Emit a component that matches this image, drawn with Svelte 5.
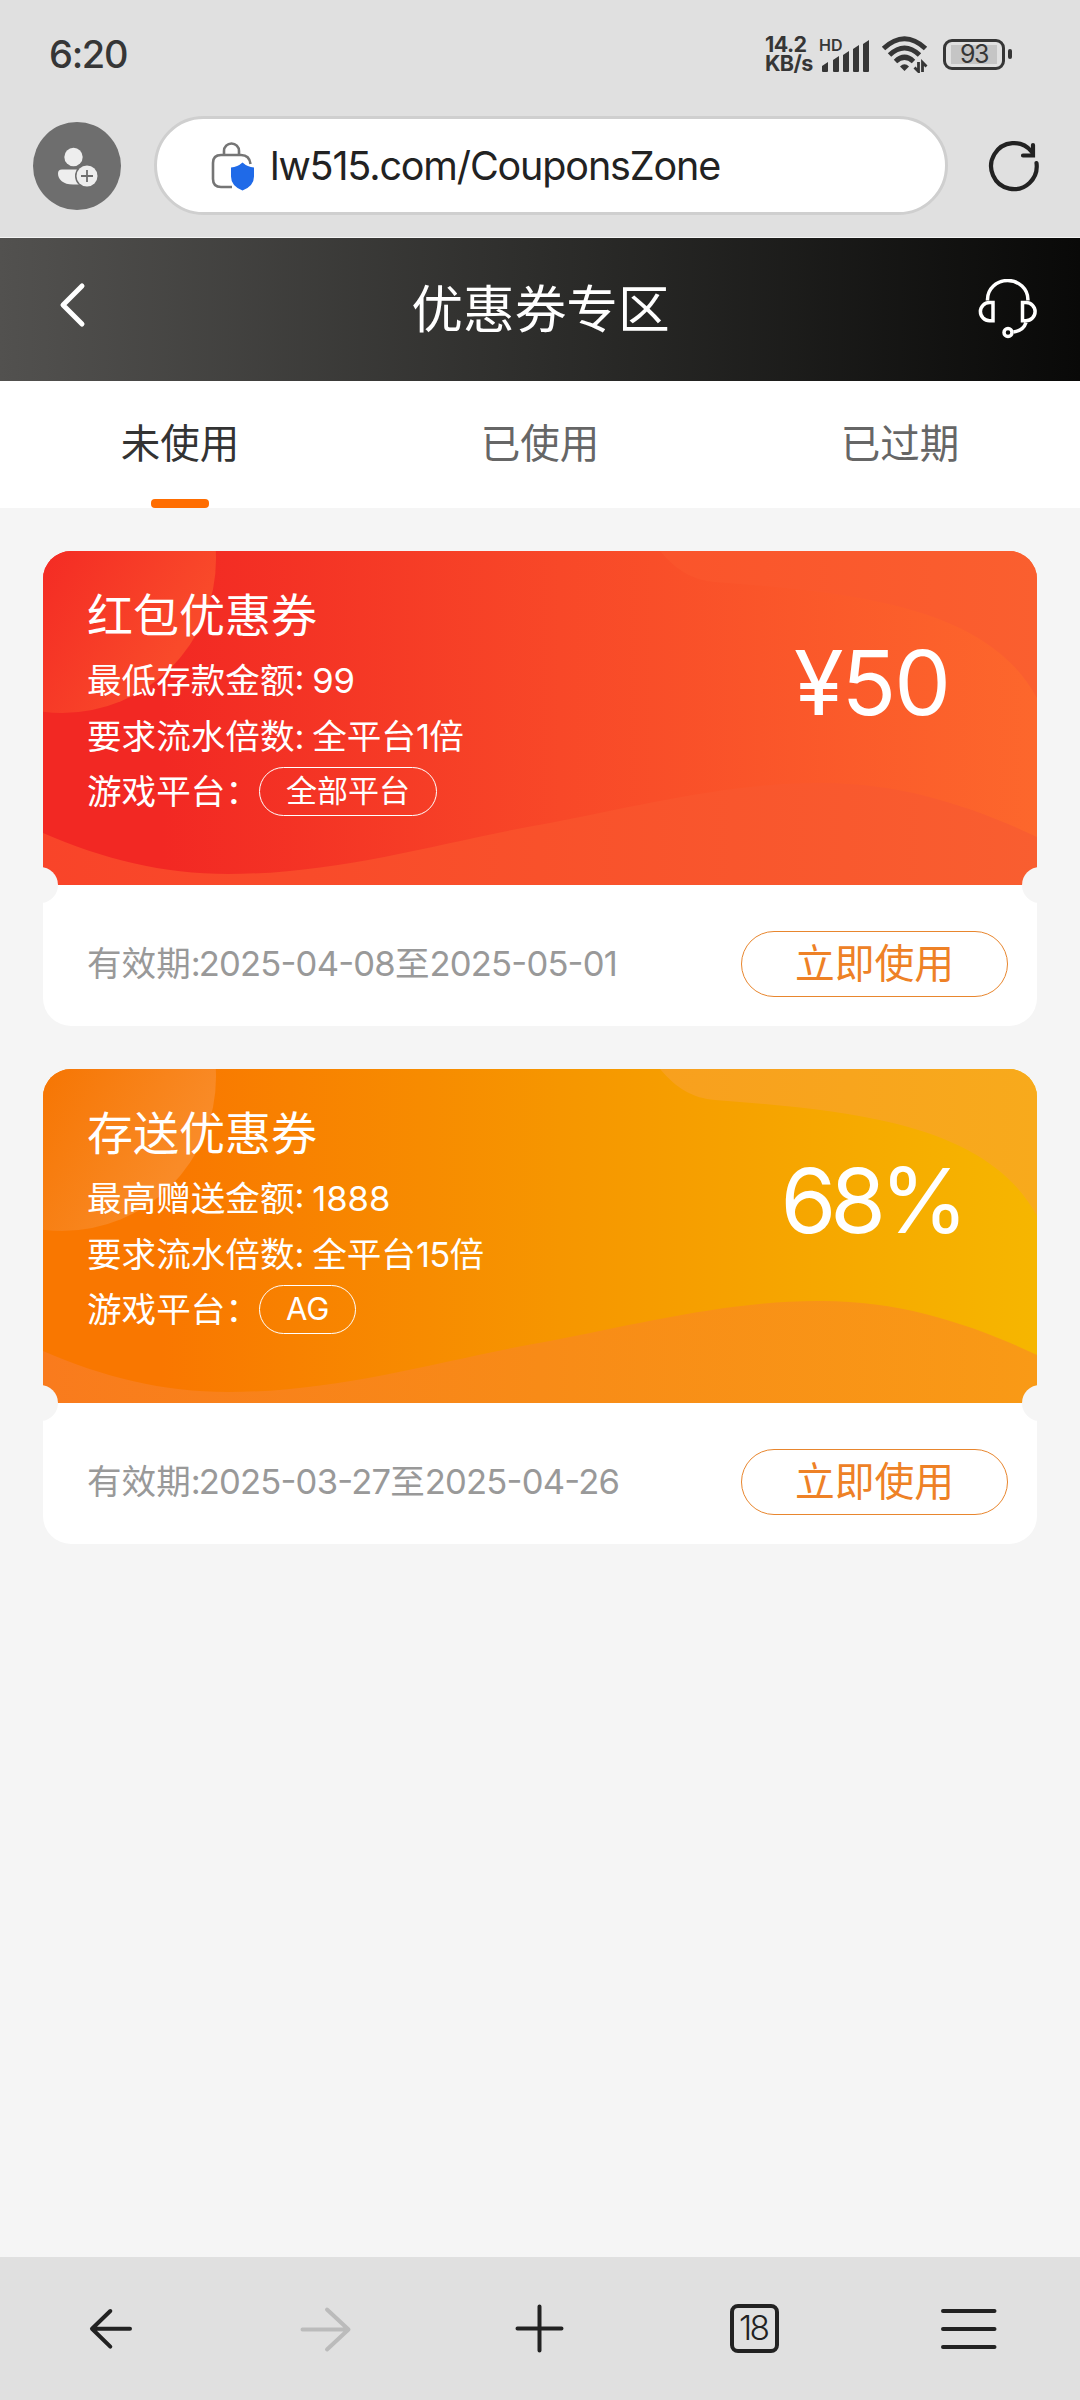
<script>
  const tabs = ['未使用', '已使用', '已过期'];
  let activeTab = 0;

  const coupons = [
    {
      theme: 'red',
      title: '红包优惠券',
      limitLabel: '最低存款金额:',
      limit: '99',
      turnover: ['全平台', '1', '倍'],
      platform: '全部平台',
      amount: '¥50',
      from: '2025-04-08',
      to: '2025-05-01',
      base: ['#f22823', '#f84828', '#fd672c'],
      wave: ['#f94429', '#f9512b', '#f95e30'],
      corner: ['#fa542b', '#fa5f2f'],
      bubble: ['#f42c24', '#f94a2a']
    },
    {
      theme: 'orange',
      title: '存送优惠券',
      limitLabel: '最高赠送金额:',
      limit: '1888',
      turnover: ['全平台', '15', '倍'],
      platform: 'AG',
      amount: '68%',
      from: '2025-03-27',
      to: '2025-04-26',
      base: ['#f97700', '#f69600', '#f6b600'],
      wave: ['#f97b1d', '#f88b17', '#f99a16'],
      corner: ['#f8a01e', '#f8aa1c'],
      bubble: ['#f67604', '#f98b27']
    }
  ];
</script>

<div class="screen">
  <div class="chrome">
    <div class="status">
      <span class="clock">6:20</span>
      <div class="indicators">
        <div class="speed">14.2<br />KB/s</div>
        <div class="signal">
          <span class="hd">HD</span>
          <svg width="52" height="36" viewBox="0 0 52 36" fill="#363636">
            <path d="M4 35v-5l6-4v9q0 1-1 1H5q-1 0-1-1zM15 35V24l6-4v15q0 1-1 1h-4q-1 0-1-1zM25 35V19l6-4v20q0 1-1 1h-4q-1 0-1-1zM35 35V13l6-4v26q0 1-1 1h-4q-1 0-1-1zM45 35V8l6-4v31q0 1-1 1h-4q-1 0-1-1z" />
          </svg>
        </div>
        <svg class="wifi" width="48" height="38" viewBox="0 0 48 38" fill="none" stroke="#363636" stroke-width="5">
          <path d="M2.500 13.500Q23.500 -6 44.500 13.500M8.500 20Q23.500 6 38.500 20M14.500 26.500Q23.500 18 32.500 26.500" />
          <path d="M19 31.500q4.500-4.500 9 0l-4.500 4.500z" fill="#363636" stroke="none" />
          <path d="M37.500 27v9.500l-4-4M41.500 37V27.500l4 4" stroke-width="2.800" />
        </svg>
        <div class="battery">
          <div class="shell"><span>93</span></div>
          <i></i>
        </div>
      </div>
    </div>

    <div class="address-row">
      <svg width="88" height="88" viewBox="0 0 88 88">
        <circle cx="44" cy="44" r="44" fill="#6e6e6e" />
        <circle cx="40.500" cy="35" r="9.200" fill="#eee" />
        <path d="M29 47.500h28v15H40c-10 0-15-5-15-11q0-4 4-4z" fill="#eee" />
        <circle cx="54" cy="54" r="12" fill="#6e6e6e" />
        <circle cx="54" cy="54" r="10.500" fill="#eee" />
        <path d="M48 54h12M54 48v12" stroke="#6e6e6e" stroke-width="1.800" />
      </svg>
      <div class="address">
        <svg width="44" height="50" viewBox="0 0 44 50" fill="none">
          <path d="M13 14V10a7.500 7.500 0 0 1 15 0v4M21 46H10q-8 0-8-8V22q0-8 8-8h20q8.500 0 9.500 9" stroke="#757575" stroke-width="2.600" />
          <path d="M31.500 21.500q5 4.500 11.500 5v9q0 9.500-11.500 14q-11.500-4.500-11.500-14v-9q6.500-.5 11.500-5z" fill="#1f6ae8" />
        </svg>
        <span>lw515.com/CouponsZone</span>
      </div>
      <svg class="reload" width="54" height="54" viewBox="0 0 54 54" fill="none" stroke="#222" stroke-width="4.200" stroke-linecap="round">
        <path d="M49.500 24a22.800 23 0 1 1-5-11.500M46 6v10.500H36" />
      </svg>
    </div>
  </div>

  <header>
    <svg class="back" width="60" height="50" viewBox="0 0 60 50" fill="none" stroke="#fff" stroke-width="5" stroke-linecap="round" stroke-linejoin="round">
      <path d="M39 6 20 25l19 19" />
    </svg>
    <h1>优惠券专区</h1>
    <svg width="60" height="60" viewBox="0 0 60 60" fill="none" stroke="#fff" stroke-width="3.500">
      <path d="M9.500 21.500v-1a20.200 19 0 0 1 40.400 0v1" />
      <path d="M15 23.500v18.200h-3.500a9.100 9.100 0 0 1 0-18.200zM44.500 23.500v18.200h3.500a9.100 9.100 0 0 0 0-18.200z" />
      <path d="M48 43.500q-2.500 8-12.500 9.500" />
      <circle cx="30" cy="53.500" r="4" />
    </svg>
  </header>

  <nav class="tabs">
    {#each tabs as tab, i}
      <button class:active={activeTab === i} on:click={() => (activeTab = i)}>{tab}</button>
    {/each}
  </nav>

  <main>
    {#each coupons as c}
      <article class="coupon">
        <div class="top">
          <svg class="art" width="994" height="334" viewBox="0 0 994 334">
            <defs>
              <linearGradient id="{c.theme}-base">
                <stop offset=".12" stop-color={c.base[0]} />
                <stop offset=".52" stop-color={c.base[1]} />
                <stop offset="1" stop-color={c.base[2]} />
              </linearGradient>
              <linearGradient id="{c.theme}-wave">
                <stop offset="0" stop-color={c.wave[0]} />
                <stop offset=".5" stop-color={c.wave[1]} />
                <stop offset="1" stop-color={c.wave[2]} />
              </linearGradient>
              <linearGradient id="{c.theme}-corner">
                <stop offset="0" stop-color={c.corner[0]} />
                <stop offset="1" stop-color={c.corner[1]} />
              </linearGradient>
              <linearGradient id="{c.theme}-bubble" gradientUnits="userSpaceOnUse" x1="0" y1="10" x2="140" y2="90">
                <stop offset="0" stop-color={c.bubble[0]} />
                <stop offset="1" stop-color={c.bubble[1]} />
              </linearGradient>
            </defs>
            <rect width="994" height="334" fill="url(#{c.theme}-base)" />
            <circle cx="19" cy="8" r="154" fill="url(#{c.theme}-bubble)" />
            <path d="M617 0C634 20 650 29 672 31C740 36 800 42 850 54C925 72 970 103 994 147V0z" fill="url(#{c.theme}-corner)" />
            <path d="M0 282C60 308 120 323 185 323C300 323 400 290 507 272C590 256 690 231 779 232C860 232 930 256 994 286V334H0z" fill="url(#{c.theme}-wave)" />
          </svg>
          <div class="info">
            <h2>{c.title}</h2>
            <p>{c.limitLabel} <b class="limit">{c.limit}</b></p>
            <p>要求流水倍数: {c.turnover[0]}<b class="num">{c.turnover[1]}</b>{c.turnover[2]}</p>
            <p class="platform">游戏平台：<span class="pill">{c.platform}</span></p>
          </div>
          <div class="amount" class:percent={c.amount.endsWith('%')}>{c.amount}</div>
        </div>
        <div class="bottom">
          <span class="date">有效期:<b class="num from">{c.from}</b>至<b class="num">{c.to}</b></span>
          <button class="use">立即使用</button>
        </div>
      </article>
    {/each}
  </main>

  <footer>
    <svg width="60" height="60" viewBox="0 0 60 60">
      <path d="M30.300 12 12 29.800l18.300 17.800M12 29.800h38" />
    </svg>
    <svg class="disabled" width="60" height="60" viewBox="0 0 60 60">
      <path d="M32 10.500l21.500 20L32 50.500M53.500 30.500H7.500" />
    </svg>
    <svg width="60" height="60" viewBox="0 0 60 60">
      <path d="M29.500 7.500v44M7.500 29.500h44" />
    </svg>
    <div class="count">18</div>
    <svg width="60" height="60" viewBox="0 0 60 60">
      <path d="M4 12h51.500M4 30h51.500M4 48h51.500" />
    </svg>
  </footer>
</div>

<style>
  :global(body) { margin: 0; background: #f5f5f5; }

  .screen {
    width: 1080px; height: 2400px; overflow: hidden; display: flex; flex-direction: column;
    background: #f5f5f5; font-family: Inter, "Noto Sans CJK SC", sans-serif;
  }
  h1, h2, p { margin: 0; font-weight: 400; }
  b { font-weight: 400; }
  button { font-family: inherit; background: none; border: none; padding: 0; }
  svg { display: block; flex: none; }

  .chrome { height: 238px; background: #e0e0e0; box-sizing: border-box; border-bottom: 1px solid #f4f4f4; }
  .status { height: 108px; display: flex; justify-content: space-between; padding: 0 68px 0 49px; color: #363636; }
  .clock { font-size: 38px; font-weight: 500; line-height: 109px; letter-spacing: -1.300px; }
  .indicators { display: flex; align-items: center; }
  .speed { width: 53px; font-size: 21.500px; font-weight: 700; line-height: 19.500px; letter-spacing: -0.6px; }
  .signal { position: relative; width: 52px; margin-right: 11px; }
  .hd { position: absolute; left: 1px; top: 1px; font-size: 16px; font-weight: 600; line-height: 16px; }
  .wifi { margin-right: 14px; }
  .battery { display: flex; align-items: center; gap: 3px; }
  .battery i { width: 4px; height: 10px; border-radius: 2px; background: #363636; }
  .shell { box-sizing: border-box; width: 62px; height: 31px; border: 3px solid #363636; border-radius: 9px; padding: 3px 5px; }
  .shell span { display: block; height: 19px; background: #c5c5c5; font-size: 25px; line-height: 19px; text-align: center; letter-spacing: -1.500px; }

  .address-row { display: flex; align-items: center; padding: 0 39px 0 33px; height: 115px; }
  .address {
    box-sizing: border-box; width: 794px; height: 99px; margin: 0 39px 0 33px; padding-left: 54px;
    border: 3px solid #cfcfcf; border-radius: 50px; background: #fff;
    display: flex; align-items: center; gap: 15px; font-size: 39.500px; color: #222; letter-spacing: -1.150px;
  }

  header {
    height: 143px; box-sizing: border-box; padding: 0 42px 2px 43px; flex: none;
    display: flex; align-items: center; justify-content: space-between; color: #fff;
    background: linear-gradient(90deg, #52514f, #2d2d2b 50%, #090908);
  }
  .back { margin-bottom: 8px; }
  h1 { font-size: 51.700px; line-height: 60px; }

  .tabs { display: flex; height: 127px; background: #fff; flex: none; }
  .tabs button { flex: 1; display: flex; flex-direction: column; align-items: center; font-size: 39.500px; line-height: 118px; color: #666; padding: 4px 0 0; }
  .tabs .active { color: #333; }
  .active::after { content: ''; width: 58px; height: 9px; border-radius: 4px; background: #ff6d00; margin-top: -4px; }

  main { flex: 1; padding: 43px; display: flex; flex-direction: column; gap: 43px; }
  .coupon { position: relative; height: 475px; border-radius: 28px; overflow: hidden; background: #fff; }
  /* ticket notches on both sides of the tear line */
  .coupon::before, .coupon::after { content: ''; position: absolute; z-index: 1; top: 316px; width: 36px; height: 36px; border-radius: 50%; background: #f5f5f5; }
  .coupon::before { left: -21px; }
  .coupon::after { right: -21px; }
  .top { position: relative; height: 334px; display: flex; color: #fff; }
  .art { position: absolute; inset: 0; }
  .info { position: relative; width: 619px; padding: 36px 0 0 44px; }
  h2 { font-size: 46px; line-height: 56px; margin-bottom: 10px; }
  p { font-size: 34.600px; line-height: 55.600px; white-space: nowrap; word-spacing: -2px; }
  .num { letter-spacing: -0.8px; font-feature-settings: "case"; }
  .platform { display: flex; align-items: center; }
  .pill { box-sizing: border-box; height: 49px; margin-left: -1px; border: 1.500px solid #fff; border-radius: 25px; padding: 0 26px; font-size: 31px; line-height: 46px; }
  .amount { position: relative; flex: 1; text-align: center; font-size: 90px; line-height: 110px; padding-top: 77px; letter-spacing: -2px; }
  .percent { letter-spacing: -6px; }

  .bottom { display: flex; align-items: center; justify-content: space-between; height: 141px; box-sizing: border-box; padding: 17px 29px 0 44px; }
  .date { font-size: 34.600px; color: #999; margin-top: -6px; }
  .from { margin-left: -2px; }
  .use { width: 267px; height: 66px; border: 1px solid #e8862e; border-radius: 33px; font-size: 39.800px; line-height: 60px; color: #ee8126; }

  footer { height: 143px; background: #e0e0e0; display: flex; align-items: center; justify-content: space-between; padding: 0 81px 0 80px; flex: none; }
  footer svg { fill: none; stroke: #222; stroke-width: 4; stroke-linecap: round; stroke-linejoin: round; }
  footer .disabled { stroke: #bbb; }
  .count { box-sizing: border-box; width: 49px; height: 49px; margin: 0 5px 0 6px; border: 4px solid #222; border-radius: 8px; font-size: 33.500px; font-weight: 300; line-height: 41px; text-align: center; text-indent: -3px; letter-spacing: -2.500px; color: #222; }
</style>
